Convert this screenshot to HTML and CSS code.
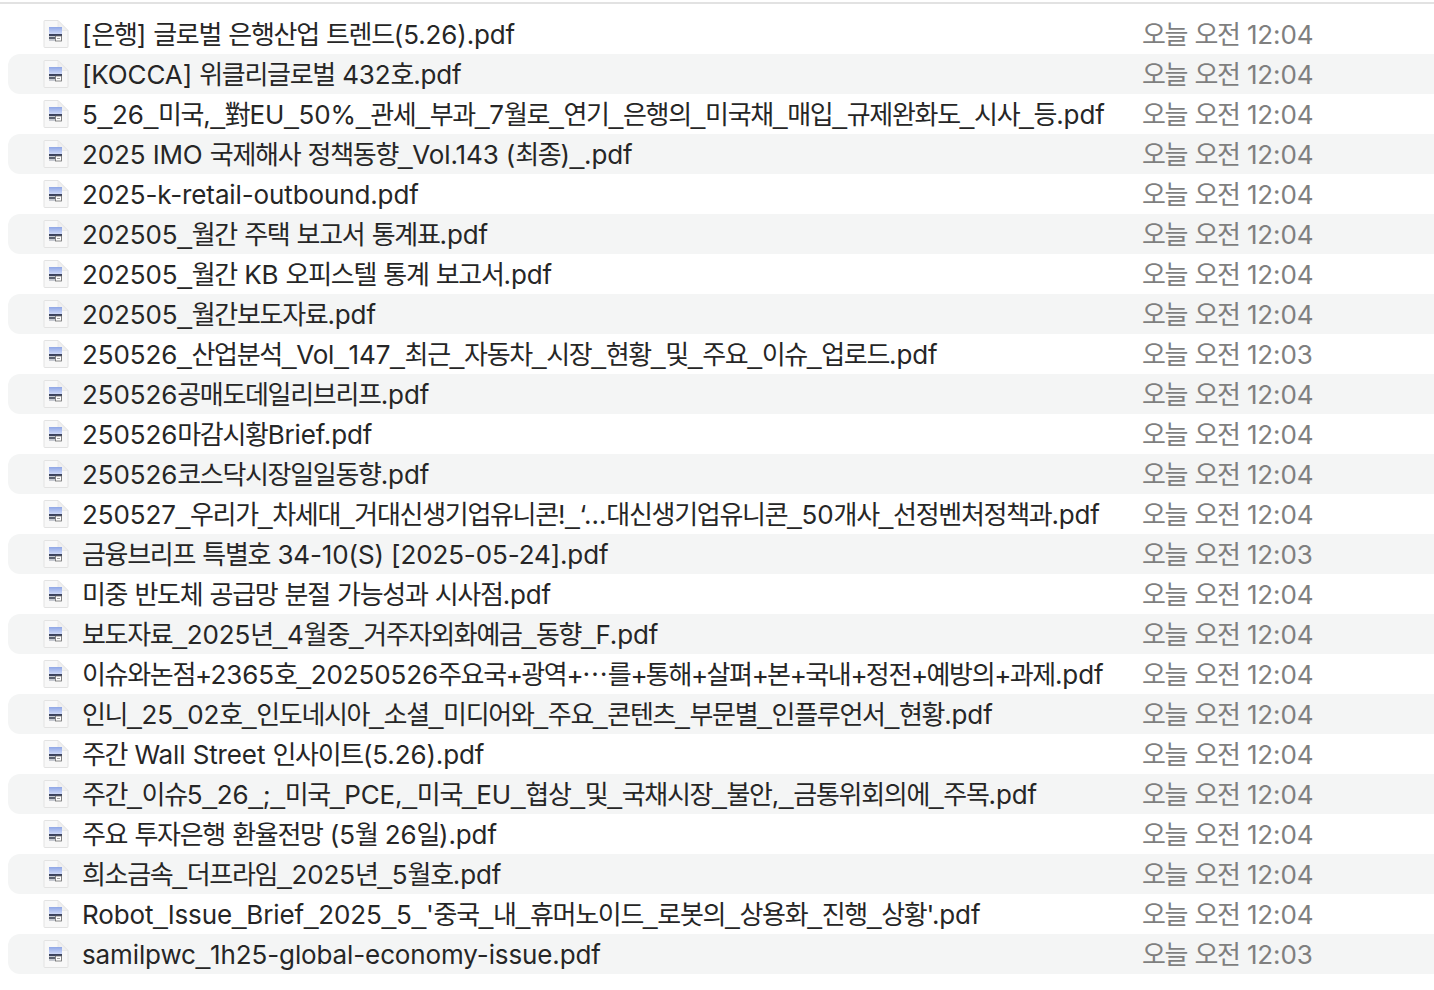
FILE: index.html
```html
<!DOCTYPE html>
<html lang="ko">
<head>
  <meta charset="UTF-8">
  <title>Finder</title>
  <link rel="stylesheet" href="styles.css">
</head>
<body>
  <svg class="defs" width="0" height="0">
    <defs>
      <linearGradient id="sky" x1="0" y1="0" x2="0" y2="1">
        <stop offset="0" stop-color="#8fa6e6"/>
        <stop offset="1" stop-color="#cfdaf8"/>
      </linearGradient>
    </defs>
    <symbol id="pdf" viewBox="0 0 26 30">
      <path d="M2 1.500h13l10 10v16a1 1 0 0 1-1 1H2a1 1 0 0 1-1-1V2.500a1 1 0 0 1 1-1z" fill="#f8f8f8" stroke="#e2e2e2"/>
      <path d="M15 1.500v8a2 2 0 0 0 2 2h8z" fill="#f0f0f0" stroke="#e2e2e2" stroke-width=".6"/>
      <rect x="6" y="8" width="13" height="7" fill="url(#sky)"/>
      <rect x="6" y="15" width="13" height="2" fill="#3c435e"/>
      <rect x="6" y="17" width="13" height="5" fill="#c6c9d1"/>
      <rect x="6" y="18" width="6" height="2" fill="#5a6170"/>
      <rect x="12.500" y="17" width="6" height="5" fill="#fff" stroke="#6a6a6a" stroke-width=".8"/>
      <path d="M14 19.500h3" stroke="#8a8a8a" stroke-width=".8"/>
    </symbol>
  </svg>

  <main class="list">
    <div class="row"><svg class="icon"><use href="#pdf"/></svg><span class="name">[은행] 글로벌 은행산업 트렌드(5.26).pdf</span><span class="date">오늘 오전 12:04</span></div>
    <div class="row"><svg class="icon"><use href="#pdf"/></svg><span class="name">[KOCCA] 위클리글로벌 432호.pdf</span><span class="date">오늘 오전 12:04</span></div>
    <div class="row"><svg class="icon"><use href="#pdf"/></svg><span class="name">5_26_미국,_對EU_50%_관세_부과_7월로_연기_은행의_미국채_매입_규제완화도_시사_등.pdf</span><span class="date">오늘 오전 12:04</span></div>
    <div class="row"><svg class="icon"><use href="#pdf"/></svg><span class="name">2025 IMO 국제해사 정책동향_Vol.143 (최종)_.pdf</span><span class="date">오늘 오전 12:04</span></div>
    <div class="row"><svg class="icon"><use href="#pdf"/></svg><span class="name">2025-k-retail-outbound.pdf</span><span class="date">오늘 오전 12:04</span></div>
    <div class="row"><svg class="icon"><use href="#pdf"/></svg><span class="name">202505_월간 주택 보고서 통계표.pdf</span><span class="date">오늘 오전 12:04</span></div>
    <div class="row"><svg class="icon"><use href="#pdf"/></svg><span class="name">202505_월간 KB 오피스텔 통계 보고서.pdf</span><span class="date">오늘 오전 12:04</span></div>
    <div class="row"><svg class="icon"><use href="#pdf"/></svg><span class="name">202505_월간보도자료.pdf</span><span class="date">오늘 오전 12:04</span></div>
    <div class="row"><svg class="icon"><use href="#pdf"/></svg><span class="name">250526_산업분석_Vol_147_최근_자동차_시장_현황_및_주요_이슈_업로드.pdf</span><span class="date">오늘 오전 12:03</span></div>
    <div class="row"><svg class="icon"><use href="#pdf"/></svg><span class="name">250526공매도데일리브리프.pdf</span><span class="date">오늘 오전 12:04</span></div>
    <div class="row"><svg class="icon"><use href="#pdf"/></svg><span class="name">250526마감시황Brief.pdf</span><span class="date">오늘 오전 12:04</span></div>
    <div class="row"><svg class="icon"><use href="#pdf"/></svg><span class="name">250526코스닥시장일일동향.pdf</span><span class="date">오늘 오전 12:04</span></div>
    <div class="row"><svg class="icon"><use href="#pdf"/></svg><span class="name">250527_우리가_차세대_거대신생기업유니콘!_‘…대신생기업유니콘_50개사_선정벤처정책과.pdf</span><span class="date">오늘 오전 12:04</span></div>
    <div class="row"><svg class="icon"><use href="#pdf"/></svg><span class="name">금융브리프 특별호 34-10(S) [2025-05-24].pdf</span><span class="date">오늘 오전 12:03</span></div>
    <div class="row"><svg class="icon"><use href="#pdf"/></svg><span class="name">미중 반도체 공급망 분절 가능성과 시사점.pdf</span><span class="date">오늘 오전 12:04</span></div>
    <div class="row"><svg class="icon"><use href="#pdf"/></svg><span class="name">보도자료_2025년_4월중_거주자외화예금_동향_F.pdf</span><span class="date">오늘 오전 12:04</span></div>
    <div class="row"><svg class="icon"><use href="#pdf"/></svg><span class="name">이슈와논점+2365호_20250526주요국+광역+⋯를+통해+살펴+본+국내+정전+예방의+과제.pdf</span><span class="date">오늘 오전 12:04</span></div>
    <div class="row"><svg class="icon"><use href="#pdf"/></svg><span class="name">인니_25_02호_인도네시아_소셜_미디어와_주요_콘텐츠_부문별_인플루언서_현황.pdf</span><span class="date">오늘 오전 12:04</span></div>
    <div class="row"><svg class="icon"><use href="#pdf"/></svg><span class="name">주간 Wall Street 인사이트(5.26).pdf</span><span class="date">오늘 오전 12:04</span></div>
    <div class="row"><svg class="icon"><use href="#pdf"/></svg><span class="name">주간_이슈5_26_;_미국_PCE,_미국_EU_협상_및_국채시장_불안,_금통위회의에_주목.pdf</span><span class="date">오늘 오전 12:04</span></div>
    <div class="row"><svg class="icon"><use href="#pdf"/></svg><span class="name">주요 투자은행 환율전망 (5월 26일).pdf</span><span class="date">오늘 오전 12:04</span></div>
    <div class="row"><svg class="icon"><use href="#pdf"/></svg><span class="name">희소금속_더프라임_2025년_5월호.pdf</span><span class="date">오늘 오전 12:04</span></div>
    <div class="row"><svg class="icon"><use href="#pdf"/></svg><span class="name">Robot_Issue_Brief_2025_5_'중국_내_휴머노이드_로봇의_상용화_진행_상황'.pdf</span><span class="date">오늘 오전 12:04</span></div>
    <div class="row"><svg class="icon"><use href="#pdf"/></svg><span class="name">samilpwc_1h25-global-economy-issue.pdf</span><span class="date">오늘 오전 12:03</span></div>
  </main>

  <script src="app.js"></script>
</body>
</html>
```

FILE: styles.css
```css
html {
  box-sizing: border-box;
}
*, *::after, *::before {
  margin: 0;
  padding: 0;
  box-sizing: inherit;
}
body {
  height: 990px;
  overflow: hidden;
  background: #fff;
  padding-top: 14px;
  font-family: "Inter", "Noto Sans CJK KR", sans-serif;
  font-size: 26px;
  letter-spacing: -0.12px;
  color: #262626;
}
body::before {
  content: "";
  position: absolute;
  top: 2px;
  left: 0;
  width: 100%;
  height: 2px;
  background: #e2e2e2;
}
.defs {
  position: absolute;
}
.list {
  margin-left: 8px;
}
.row {
  display: flex;
  align-items: center;
  height: 40px;
  padding-left: 35px;
  border-radius: 12px 0 0 12px;
}
.row:nth-child(even) {
  background: #f4f5f5;
}
.icon {
  width: 26px;
  height: 30px;
  flex: none;
  margin-right: 13px;
}
.name, .date {
  line-height: 32px;
  padding-top: 2px;
  white-space: nowrap;
}
.name {
  width: 1060px;
  flex: none;
}
.date {
  color: #7f7f7f;
}
/* hangul tighter, underscores wider and plus signs narrower, closer to the mac system font */
.ko {
  letter-spacing: -1.3px;
}
.us {
  font-family: "Liberation Sans", sans-serif;
  letter-spacing: -0.2px;
}
.pl {
  letter-spacing: -1.8px;
}
```

FILE: app.js
```js
// wrap hangul runs, underscores and plus signs so the stylesheet can space them
document.querySelectorAll('.name, .date').forEach((cell) => {
  cell.innerHTML = cell.textContent
    .replace(/[\uac00-\ud7a3\u5c0d]+/g, '<span class="ko">$&</span>')
    .replace(/_/g, '<span class="us">_</span>')
    .replace(/\+/g, '<span class="pl">+</span>')
})
```
